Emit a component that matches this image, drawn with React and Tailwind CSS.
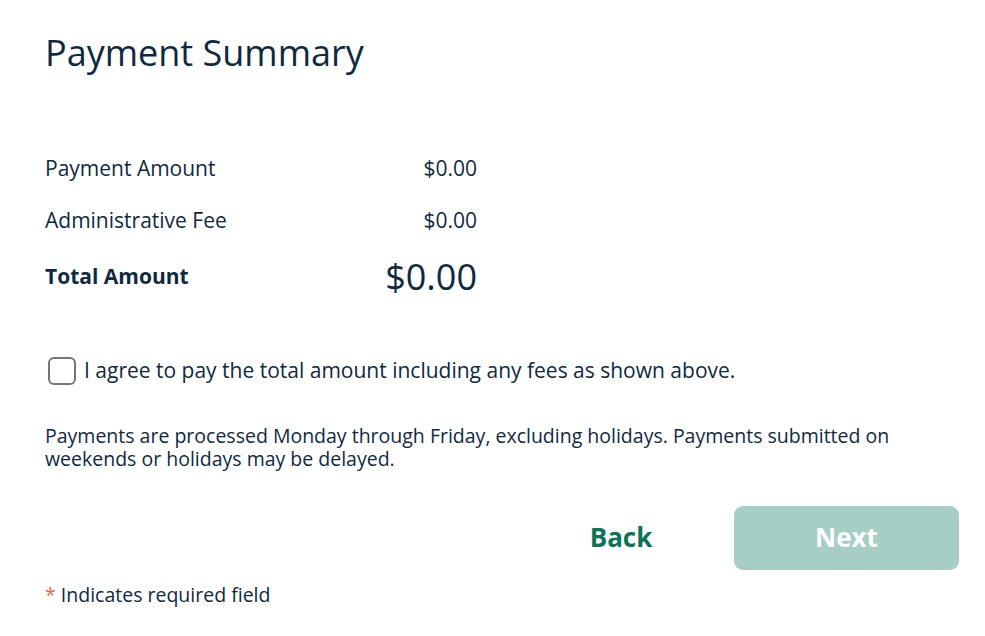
import React from 'react';

export default function App() {
  return (
    <div className="min-h-screen bg-white text-[#0f2a3f] pl-[45px] pr-[26px] pt-[29px]" style={{ fontFamily: "'Open Sans', sans-serif" }}>
      <h1 className="text-[36px] leading-[48px] font-normal">Payment Summary</h1>

      <div className="mt-[79px] w-[432px]">
        <div className="flex justify-between items-center h-[26px] text-[21px]">
          <span>Payment Amount</span>
          <span>$0.00</span>
        </div>
        <div className="flex justify-between items-center h-[26px] mt-[26px] text-[21px]">
          <span>Administrative Fee</span>
          <span>$0.00</span>
        </div>
        <div className="flex justify-between items-center h-[40px] mt-[23px]">
          <span className="text-[21px] font-bold">Total Amount</span>
          <span className="text-[36px]">$0.00</span>
        </div>
      </div>

      <label className="flex items-center gap-[8px] mt-[58px] ml-[3px]">
        <span className="w-[28px] h-[28px] rounded-[6px] border-2 border-[#767676] bg-white shrink-0" />
        <span className="text-[21px]">I agree to pay the total amount including any fees as shown above.</span>
      </label>

      <p className="mt-[37px] text-[19.5px] leading-[23px] max-w-[900px]">
        Payments are processed Monday through Friday, excluding holidays. Payments submitted on weekends or holidays may be delayed.
      </p>

      <div className="flex justify-end items-center mt-[36px]">
        <button className="text-[26px] font-bold text-[#0b7456] w-[226px] text-center">Back</button>
        <button className="w-[225px] h-[64px] rounded-[9px] bg-[#a7cec5] text-white text-[26px] font-bold">Next</button>
      </div>

      <p className="mt-[10px] text-[19.5px]">
        <span className="text-[#e0654c]">*</span> Indicates required field
      </p>
    </div>
  );
}
